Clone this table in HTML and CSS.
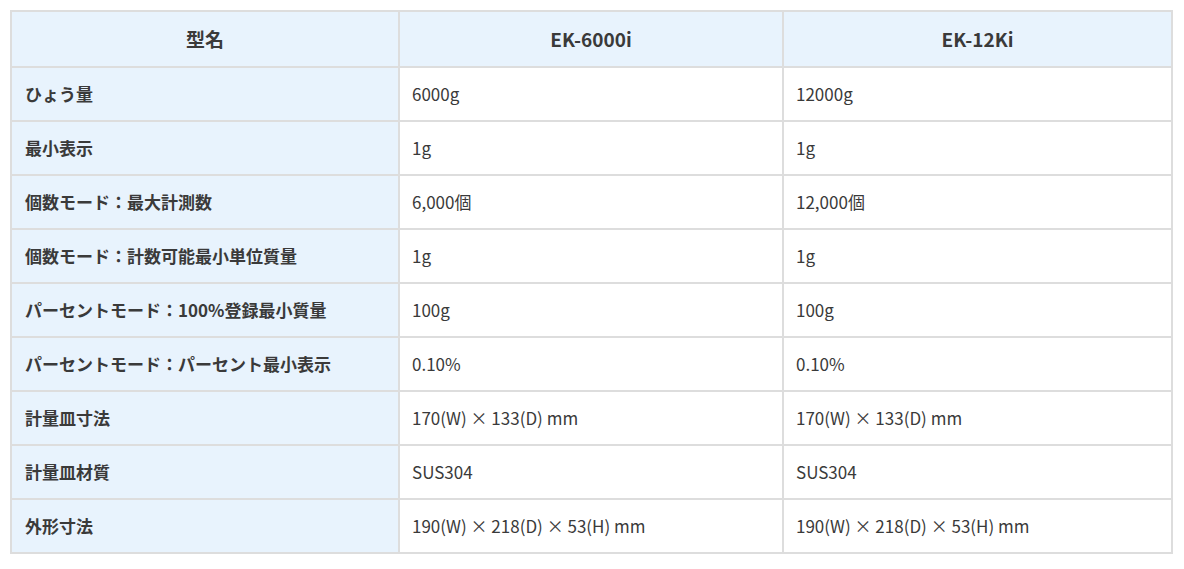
FILE: index.html
```html
<!DOCTYPE html>
<html lang="ja">
<head>
<meta charset="utf-8">
<link rel="stylesheet" href="styles.css">
</head>
<body>
<div class="wrap">
<table class="spec">
  <colgroup><col class="c1"><col class="c2"><col class="c3"></colgroup>
  <thead>
    <tr><th>型名</th><th>EK-6000i</th><th>EK-12Ki</th></tr>
  </thead>
  <tbody>
    <tr><th>ひょう量</th><td>6000g</td><td>12000g</td></tr>
    <tr><th>最小表示</th><td>1g</td><td>1g</td></tr>
    <tr><th>個数モード：最大計測数</th><td>6,000個</td><td>12,000個</td></tr>
    <tr><th>個数モード：計数可能最小単位質量</th><td>1g</td><td>1g</td></tr>
    <tr><th>パーセントモード：100%登録最小質量</th><td>100g</td><td>100g</td></tr>
    <tr><th>パーセントモード：パーセント最小表示</th><td>0.10%</td><td>0.10%</td></tr>
    <tr><th>計量皿寸法</th><td>170(W) × 133(D) mm</td><td>170(W) × 133(D) mm</td></tr>
    <tr><th>計量皿材質</th><td>SUS304</td><td>SUS304</td></tr>
    <tr><th>外形寸法</th><td>190(W) × 218(D) × 53(H) mm</td><td>190(W) × 218(D) × 53(H) mm</td></tr>
  </tbody>
</table>
</div>
</body>
</html>
```
FILE: styles.css
```css
html, body { margin: 0; padding: 0; background: #fff; }
.wrap { padding: 10px 12px 10px 10px; }
.spec {
  width: 1161px;
  border-collapse: collapse;
  table-layout: fixed;
  font-family: "Noto Sans CJK JP", "Noto Sans", sans-serif;
  font-size: 17px;
  color: #3a3a3a;
}
.c1 { width: 388px; }
.c2 { width: 384px; }
.c3 { width: 389px; }
.spec th, .spec td {
  border: 2px solid #dddddd;
  padding: 0 13px;
  height: 52px;
  text-align: left;
  vertical-align: middle;
  line-height: 24px;
}
.spec thead th {
  background: #e8f3fd;
  text-align: center;
  font-weight: 700;
  font-size: 19px;
  height: 54px;
}
.spec tbody th {
  background: #e8f3fd;
  font-weight: 700;
}
.spec td { background: #fff; font-weight: 400; padding-left: 12px; }
```
